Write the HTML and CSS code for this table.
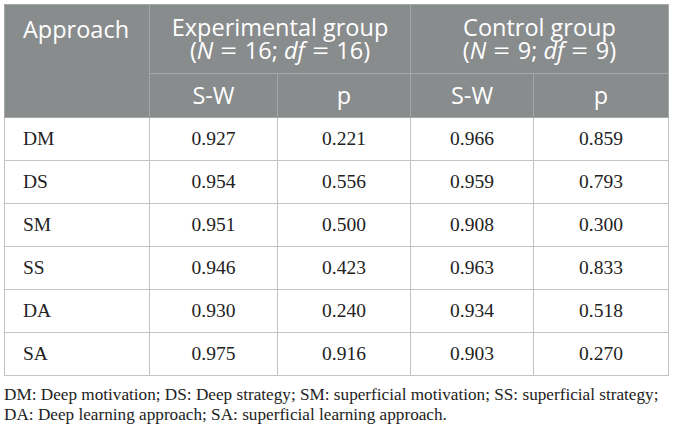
FILE: index.html
```html
<!DOCTYPE html>
<html>
<head>
<meta charset="utf-8">
<link rel="stylesheet" href="styles.css">
</head>
<body>
<div class="wrap">
<table class="stats">
  <colgroup>
    <col class="c1"><col class="c2"><col class="c3"><col class="c4"><col class="c5">
  </colgroup>
  <thead>
    <tr class="h1">
      <th rowspan="2" class="lead">Approach</th>
      <th colspan="2">Experimental group<br>(<i>N</i><span class="eq">=</span>16; <i>df</i><span class="eq">=</span>16)</th>
      <th colspan="2">Control group<br>(<i>N</i><span class="eq">=</span>9; <i>df</i><span class="eq">=</span>9)</th>
    </tr>
    <tr class="h2">
      <th>S-W</th><th>p</th><th>S-W</th><th>p</th>
    </tr>
  </thead>
  <tbody>
    <tr><td class="name">DM</td><td>0.927</td><td>0.221</td><td>0.966</td><td>0.859</td></tr>
    <tr><td class="name">DS</td><td>0.954</td><td>0.556</td><td>0.959</td><td>0.793</td></tr>
    <tr><td class="name">SM</td><td>0.951</td><td>0.500</td><td>0.908</td><td>0.300</td></tr>
    <tr><td class="name">SS</td><td>0.946</td><td>0.423</td><td>0.963</td><td>0.833</td></tr>
    <tr><td class="name">DA</td><td>0.930</td><td>0.240</td><td>0.934</td><td>0.518</td></tr>
    <tr><td class="name">SA</td><td>0.975</td><td>0.916</td><td>0.903</td><td>0.270</td></tr>
  </tbody>
</table>
<p class="note">DM: Deep motivation; DS: Deep strategy; SM: superficial motivation; SS: superficial strategy;<br>DA: Deep learning approach; SA: superficial learning approach.</p>
</div>
</body>
</html>
```
FILE: styles.css
```css
html, body {
  margin: 0;
  padding: 0;
  background: #ffffff;
}
.wrap {
  padding: 4px 0 0 4px;
}
.stats {
  border-collapse: collapse;
  table-layout: fixed;
  width: 664px;
  border: 1px solid #c3c6c3;
}
.c1 { width: 145px; }
.c2 { width: 128px; }
.c3 { width: 133px; }
.c4 { width: 123px; }
.c5 { width: 135px; }
.stats th {
  background: #898c8d;
  color: #ffffff;
  font-family: "Open Sans", sans-serif;
  font-weight: 400;
  font-size: 23.5px;
  line-height: 23px;
  border: 1px solid #a5a8a9;
  padding: 0;
  text-align: center;
}
.stats th i {
  font-style: italic;
}
.eq {
  display: inline-block;
  margin: 0 9px;
  transform: scaleX(1.25);
}
.h1 th {
  height: 68px;
  vertical-align: middle;
}
.h2 th {
  height: 43px;
}
.stats th.lead {
  vertical-align: top;
  text-align: left;
  padding: 13px 0 0 18px;
}
.stats td {
  font-family: "Liberation Serif", serif;
  font-size: 19.5px;
  color: #222222;
  text-align: center;
  height: 42px;
  padding: 0;
  border: 1px solid #c3c3c3;
}
.stats td.name {
  text-align: left;
  padding-left: 18px;
}
.note {
  margin: 9px 0 0 0;
  font-family: "Liberation Serif", serif;
  font-size: 17.2px;
  line-height: 20px;
  color: #222222;
}
```
